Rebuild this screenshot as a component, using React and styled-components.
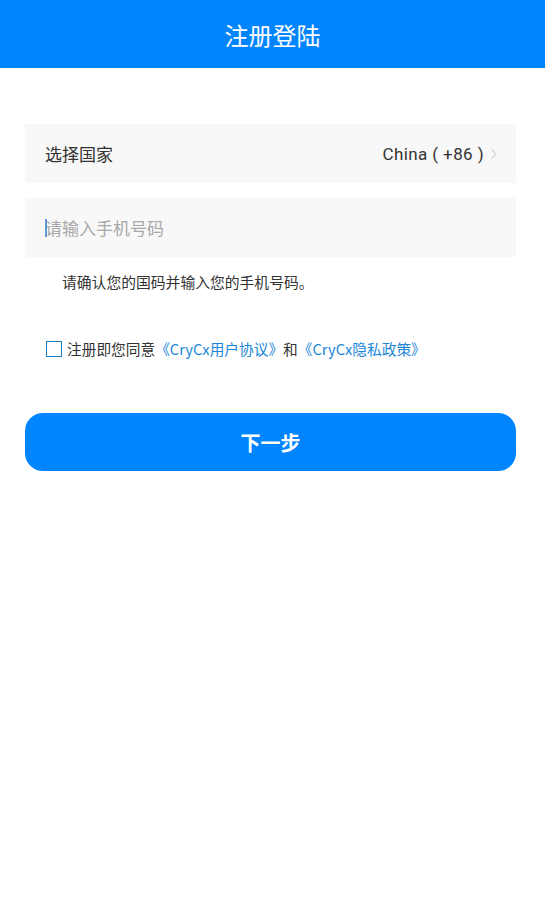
import styled, { createGlobalStyle } from "styled-components";

const GlobalStyle = createGlobalStyle`
  body {
    margin: 0;
    background: #fff;
    font-family: "Noto Sans CJK SC", "Roboto", sans-serif;
  }
`;

function App() {
  return (
    <>
      <GlobalStyle />
      <Page>
        <Header>
          <Title>注册登陆</Title>
        </Header>

        <Content>
          <CountryRow>
            <RowLabel>选择国家</RowLabel>
            <CountryValue>
              China ( +86 )
              <Chevron viewBox="0 0 8 14">
                <path d="M1.5 1.5 L6.5 7 L1.5 12.5" />
              </Chevron>
            </CountryValue>
          </CountryRow>

          <PhoneRow>
            <Caret />
            <PhoneInput placeholder="请输入手机号码" />
          </PhoneRow>

          <Hint>请确认您的国码并输入您的手机号码。</Hint>

          <Agreement>
            <CheckBox />
            <span>注册即您同意</span>
            <Link>《CryCx用户协议》</Link>
            <span>和</span>
            <Link>《CryCx隐私政策》</Link>
          </Agreement>

          <NextButton>下一步</NextButton>
        </Content>
      </Page>
    </>
  );
}

export default App;

const Page = styled.div`
  width: 545px;
  min-height: 919px;
  background: #fff;
`;

const Header = styled.header`
  height: 68px;
  background-color: #0085ff;
  display: flex;
  align-items: center;
  justify-content: center;
`;

const Title = styled.h1`
  margin: 0;
  color: #fff;
  font-size: 24px;
  font-weight: 400;
`;

const Content = styled.div`
  display: flex;
  flex-direction: column;
  padding: 56px 29px 0 25px;
`;

const Field = styled.div`
  height: 59px;
  background-color: #f8f8f8;
  display: flex;
  align-items: center;
  padding: 0 19px 0 20px;
  box-sizing: border-box;
`;

const CountryRow = styled(Field)`
  justify-content: space-between;
`;

const RowLabel = styled.span`
  font-size: 17px;
  color: #333;
`;

const CountryValue = styled.span`
  display: flex;
  align-items: center;
  gap: 6px;
  font-family: "Roboto", "Noto Sans CJK SC", sans-serif;
  font-size: 17px;
  letter-spacing: 0.4px;
  color: #333;
`;

const Chevron = styled.svg`
  width: 7px;
  height: 12px;
  fill: none;
  stroke: #cfcfcf;
  stroke-width: 1.3;
`;

const PhoneRow = styled(Field)`
  margin-top: 15px;
  position: relative;
`;

const Caret = styled.span`
  position: absolute;
  left: 20px;
  top: 21px;
  width: 2px;
  height: 18px;
  background: #5b9bd8;
`;

const PhoneInput = styled.input`
  flex: 1;
  border: none;
  outline: none;
  background: transparent;
  padding: 0;
  font-family: inherit;
  font-size: 17px;
  color: #333;
  &::placeholder {
    color: #a8a8a8;
  }
`;

const Hint = styled.p`
  margin: 15px 0 0 37px;
  font-size: 14.8px;
  color: #333;
  line-height: 20px;
`;

const Agreement = styled.div`
  display: flex;
  align-items: center;
  margin: 46px 0 0 21px;
  font-size: 14.7px;
  color: #333;
`;

const CheckBox = styled.span`
  width: 14px;
  height: 14px;
  border: 1.5px solid #1f7fc4;
  margin-right: 5px;
`;

const Link = styled.span`
  color: #1a86d8;
`;

const NextButton = styled.button`
  margin-top: 54px;
  height: 58px;
  border: none;
  border-radius: 18px;
  background-color: #0085ff;
  color: #fff;
  font-family: inherit;
  font-size: 20px;
  font-weight: 600;
  cursor: pointer;
`;
